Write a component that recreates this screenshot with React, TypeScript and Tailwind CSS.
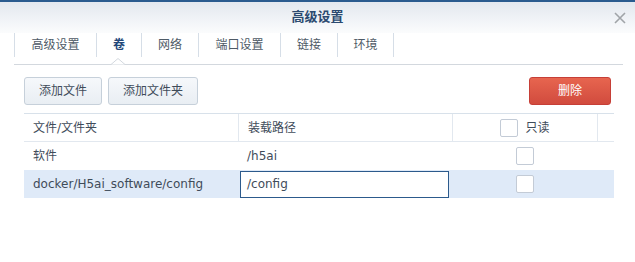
import React from "react";

const font = { fontFamily: '"DejaVu Sans", "Noto Sans CJK SC", sans-serif' };

function Checkbox() {
  return <div className="w-[18px] h-[18px] bg-white border border-[#c3cbd6] rounded-[2px]" />;
}

export default function App() {
  const tabs = [
    { label: "高级设置", w: "w-[82px]" },
    { label: "卷", w: "w-[45px]", active: true },
    { label: "网络", w: "w-[57px]" },
    { label: "端口设置", w: "w-[82px]" },
    { label: "链接", w: "w-[57px]" },
    { label: "环境", w: "w-[57px]" },
  ];
  return (
    <div className="w-[635px] h-[262px] bg-white overflow-hidden text-[12px] text-[#3f4c5a]" style={font}>
      <div className="h-[2px] bg-[#2a5b8f]" />
      <div className="relative h-[31px] bg-gradient-to-b from-[#e3e8ef] to-[#fbfcfd] flex items-center justify-center">
        <span className="text-[13px] font-bold text-[#2b4a70] -mt-[1px]">高级设置</span>
        <svg className="absolute left-[614px] top-[10px]" width="12" height="12" viewBox="0 0 12 12">
          <path d="M1 1 L11 11 M11 1 L1 11" stroke="#a0a4a8" strokeWidth="1.6" />
        </svg>
      </div>
      <div className="mx-[14px] w-[609px] relative">
        <div className="flex h-[24px]">
          {tabs.map((t, i) => (
            <div
              key={i}
              className={`${t.w} h-[24px] flex items-center justify-center border-l border-[#d6dee7] ${
                i === tabs.length - 1 ? "border-r" : ""
              } ${t.active ? "text-[#23487a] font-bold" : "text-[#4e5a66]"}`}
            >
              {t.label}
            </div>
          ))}
        </div>
        <div className="h-[7px]" />
        <div className="h-[1px] bg-[#d3d8de]" />
        <svg className="absolute left-[97px] top-[25px]" width="14" height="7" viewBox="0 0 14 7">
          <path d="M0 6.5 L7 0.5 L14 6.5" fill="#ffffff" stroke="#d3d8de" strokeWidth="1" />
        </svg>
      </div>
      <div className="ml-[24px] w-[590px] mt-[12px]">
        <div className="flex h-[28px] gap-[6px]">
          <button className="w-[78px] h-[28px] rounded-[3px] border border-[#c6d0da] bg-gradient-to-b from-[#f6f8fb] to-[#e9eef3] text-[#3f4c5a]">
            添加文件
          </button>
          <button className="w-[90px] h-[28px] rounded-[3px] border border-[#c6d0da] bg-gradient-to-b from-[#f6f8fb] to-[#e9eef3] text-[#3f4c5a]">
            添加文件夹
          </button>
          <button className="ml-auto mr-[3px] w-[82px] h-[28px] rounded-[3px] border border-[#c63f37] bg-gradient-to-b from-[#e7654f] to-[#d14b3e] text-white">
            删除
          </button>
        </div>
        <div className="mt-[8px] border-t border-[#d8e1ea]">
          <div className="flex h-[28px] border-b border-[#e2e8ef]">
            <div className="w-[214px] flex items-center pl-[9px]">文件/文件夹</div>
            <div className="w-[214px] flex items-center pl-[9px] border-l border-[#e2e8ef]">装载路径</div>
            <div className="w-[145px] flex items-center justify-center gap-[7px] border-l border-[#e2e8ef]">
              <Checkbox />
              <span>只读</span>
            </div>
            <div className="flex-1 border-l border-[#e2e8ef]" />
          </div>
          <div className="flex h-[28px]">
            <div className="w-[214px] flex items-center pl-[9px]">软件</div>
            <div className="w-[214px] flex items-center pl-[9px]">/h5ai</div>
            <div className="w-[145px] flex items-center justify-center">
              <Checkbox />
            </div>
          </div>
          <div className="flex h-[28px] bg-[#dfeaf8]">
            <div className="w-[214px] flex items-center pl-[9px]">docker/H5ai_software/config</div>
            <div className="w-[214px] flex items-center">
              <div className="ml-[2px] w-[209px] h-[27px] bg-white border border-[#2c5a8c] flex items-center pl-[6px]">
                /config
              </div>
            </div>
            <div className="w-[145px] flex items-center justify-center">
              <Checkbox />
            </div>
          </div>
        </div>
      </div>
    </div>
  );
}
